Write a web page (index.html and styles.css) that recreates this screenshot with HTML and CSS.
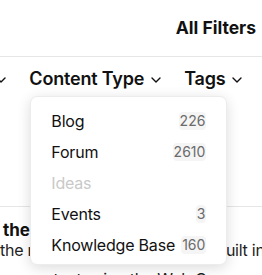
FILE: index.html
```html
<!DOCTYPE html>
<html lang="en">
<head>
<meta charset="utf-8">
<link rel="stylesheet" href="styles.css">
</head>
<body>
<div class="page">
  <header class="top">
    <button class="all-filters">All Filters</button>
  </header>
  <nav class="filters">
    <div class="filter">
      <span class="filter-label">Date</span>
      <svg class="chev" viewBox="0 0 10 6" width="10" height="6"><path d="M1 1l4 4 4-4" fill="none" stroke="#111" stroke-width="1.4" stroke-linecap="round" stroke-linejoin="round"/></svg>
    </div>
    <div class="filter">
      <span class="filter-label">Content Type</span>
      <svg class="chev" viewBox="0 0 10 6" width="10" height="6"><path d="M1 1l4 4 4-4" fill="none" stroke="#111" stroke-width="1.4" stroke-linecap="round" stroke-linejoin="round"/></svg>
      <ul class="menu">
        <li class="menu-item"><span>Blog</span><span class="count">226</span></li>
        <li class="menu-item"><span>Forum</span><span class="count">2610</span></li>
        <li class="menu-item disabled"><span>Ideas</span></li>
        <li class="menu-item"><span>Events</span><span class="count">3</span></li>
        <li class="menu-item"><span>Knowledge Base</span><span class="count">160</span></li>
      </ul>
    </div>
    <div class="filter">
      <span class="filter-label">Tags</span>
      <svg class="chev" viewBox="0 0 10 6" width="10" height="6"><path d="M1 1l4 4 4-4" fill="none" stroke="#111" stroke-width="1.4" stroke-linecap="round" stroke-linejoin="round"/></svg>
    </div>
  </nav>
  <section class="results">
    <article class="result">
      <h2 class="result-title">the Basics</h2>
      <p class="result-text"><span class="line">the redesigned community is built in</span><span class="line line-indent">content using the Web Components</span></p>
    </article>
  </section>
</div>
</body>
</html>
```
FILE: styles.css
```css
* { box-sizing: border-box; }
html, body {
  margin: 0;
  padding: 0;
  background: #fff;
}
body {
  font-family: Inter, "Noto Sans", sans-serif;
  color: #111;
  width: 262px;
  height: 275px;
  overflow: hidden;
}
.page {
  width: 262px;
}
.top {
  height: 57px;
  display: flex;
  justify-content: flex-end;
  align-items: flex-start;
  padding: 17px 6px 0 0;
  border-bottom: 1px solid #e6e6e6;
}
.all-filters {
  font: 700 17.5px/22px Inter, sans-serif;
  color: #111;
  background: none;
  border: 0;
  padding: 0;
}
.filters {
  display: flex;
  align-items: center;
  gap: 23px;
  padding-top: 10px;
  margin-left: -50px;
  white-space: nowrap;
}
.filter {
  display: flex;
  align-items: center;
  gap: 7px;
  position: relative;
}
.filter-label {
  font: 600 18px/24px Inter, sans-serif;
  color: #111;
  letter-spacing: -0.2px;
}
.chev {
  display: block;
  margin-top: 2px;
}
.menu {
  position: absolute;
  top: 29px;
  left: 1px;
  width: 197px;
  margin: 0;
  padding: 8px 20px 4px 20px;
  list-style: none;
  background: #fff;
  border: 1px solid #ececec;
  border-radius: 7px;
  box-shadow: 0 3px 14px rgba(0, 0, 0, 0.14);
  z-index: 5;
}
.menu-item {
  display: flex;
  justify-content: space-between;
  align-items: center;
  height: 31px;
  font: 400 16px/20px Inter, sans-serif;
  color: #111;
  letter-spacing: -0.2px;
}
.menu-item.disabled {
  color: #c9c9c9;
}
.count {
  font-size: 14px;
  line-height: 18px;
  letter-spacing: 0;
  color: #6b6b6b;
  background: #f5f5f5;
  border-radius: 4px;
  padding: 0 1px;
}
.results {
  margin-top: 115px;
  border-top: 1px solid #e6e6e6;
}
.result {
  padding: 12px 0 0 3px;
}
.result-title {
  margin: 0;
  font: 700 17px/22px Inter, sans-serif;
  color: #111;
}
.result-text {
  margin: -5px 0 0 -3px;
  font: 400 16px/29px Inter, sans-serif;
  letter-spacing: -0.25px;
  color: #222;
}
.line {
  display: block;
  white-space: nowrap;
}
.line-indent {
  padding-left: 26px;
}
```
